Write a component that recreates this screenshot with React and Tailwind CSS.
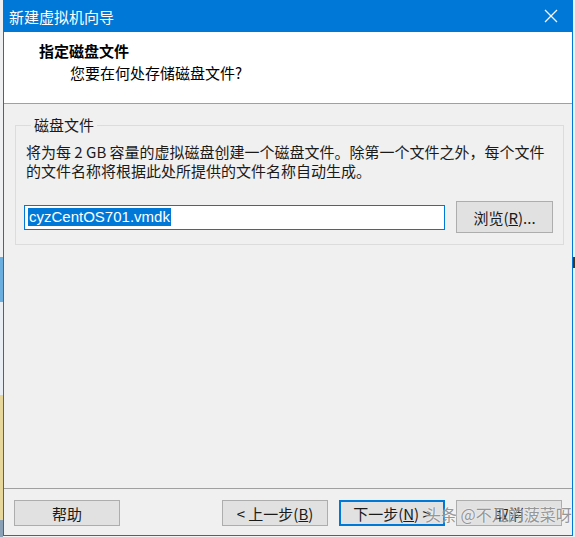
import React from "react";

const font = { fontFamily: '"Noto Sans CJK SC", "Noto Sans", sans-serif' };

const Button = ({ children, focused, className = "" }) => (
  <button
    className={`h-[26px] w-[106px] flex items-center justify-center bg-[#e1e1e1] text-[15px] text-[#1a1a1a] leading-none ${
      focused ? "border-2 border-[#0078d7]" : "border border-[#adadad]"
    } ${className}`}
  >
    {children}
  </button>
);

export default function App() {
  return (
    <div className="w-[575px] h-[537px] flex bg-[#f3f3f3] overflow-hidden" style={font}>
      {/* desktop strip on the left */}
      <div className="w-[3px] flex flex-col">
        <div className="h-[257px] bg-[#eef0f2]" />
        <div className="h-[45px] bg-[#6aaee0]" />
        <div className="h-[93px] bg-[#e8eef3]" />
        <div className="h-[125px] bg-[#e8d79a]" />
        <div className="flex-1 bg-[#8aa0b5]" />
      </div>

      {/* window */}
      <div className="w-[570px] h-[536px] flex flex-col border-l border-r border-b border-[#0078d7] relative">
        <div className="h-[32px] bg-[#0078d7] flex items-center justify-between pl-[5px] pr-[14px] shrink-0">
          <span className="text-white text-[15px] leading-none">新建虚拟机向导</span>
          <svg width="14" height="14" viewBox="0 0 14 14">
            <path d="M1 1L13 13M13 1L1 13" stroke="#ffffff" strokeWidth="1.2" />
          </svg>
        </div>

        <div className="h-[72px] bg-white border-b border-[#a0a0a0] shrink-0 pt-[9px]">
          <div className="pl-[35px] text-[15px] font-bold text-black leading-[20px]">指定磁盘文件</div>
          <div className="pl-[66px] text-[15px] text-black leading-[20px] mt-[2px]">
            您要在何处存储磁盘文件?
          </div>
        </div>

        <div className="flex-1 bg-[#f0f0f0] pt-[11px] pl-[11px] pr-[10px]">
          <fieldset className="border border-[#dcdcdc] h-[130px] pl-[10px] pr-[10px]">
            <legend className="ml-[5px] px-[3px] text-[15px] leading-[20px] text-[#1a1a1a]">磁盘文件</legend>
            <p className="text-[15px] leading-[19px] text-[#1a1a1a] whitespace-nowrap mt-[7px]">
              将为每 2 GB 容量的虚拟磁盘创建一个磁盘文件。除第一个文件之外，每个文件
              <br />
              的文件名称将根据此处所提供的文件名称自动生成。
            </p>
            <div className="flex items-center mt-[21px] -ml-[2px]">
              <div className="w-[421px] h-[25px] bg-white border border-[#0078d7] flex items-center pl-[3px]">
                <span
                  className="bg-[#0078d7] text-white text-[15px] leading-[18px] px-[1px]"
                  style={{ fontFamily: '"Liberation Sans", Arial, sans-serif' }}
                >
                  cyzCentOS701.vmdk
                </span>
              </div>
              <button className="ml-[11px] w-[97px] h-[32px] bg-[#e1e1e1] border border-[#adadad] text-[15px] text-[#1a1a1a] leading-none">
                浏览(<span className="underline">R</span>)...
              </button>
            </div>
          </fieldset>
        </div>

        <div className="h-[47px] bg-[#f0f0f0] border-t border-[#a0a0a0] shrink-0 flex pt-[11px] pl-[10px] pr-[10px]">
          <Button>帮助</Button>
          <div className="flex-1" />
          <div className="flex gap-[11px]">
            <Button>
              &lt; 上一步(<span className="underline">B</span>)
            </Button>
            <Button focused>
              下一步(<span className="underline">N</span>) &gt;
            </Button>
            <Button>取消</Button>
          </div>
        </div>

        {/* watermark */}
        <div className="absolute left-[421px] top-[504px] text-[16px] leading-[20px] text-[#8a8a8a]/90 whitespace-nowrap [text-shadow:0_0_2px_#ffffff]">
          头条 @不凡的菠菜呀
        </div>
      </div>

      <div className="w-[2px] flex flex-col">
        <div className="h-[257px] bg-[#eef0f2]" />
        <div className="h-[11px] bg-[#4a3020]" />
        <div className="flex-1 bg-[#eef0f2]" />
      </div>
    </div>
  );
}
